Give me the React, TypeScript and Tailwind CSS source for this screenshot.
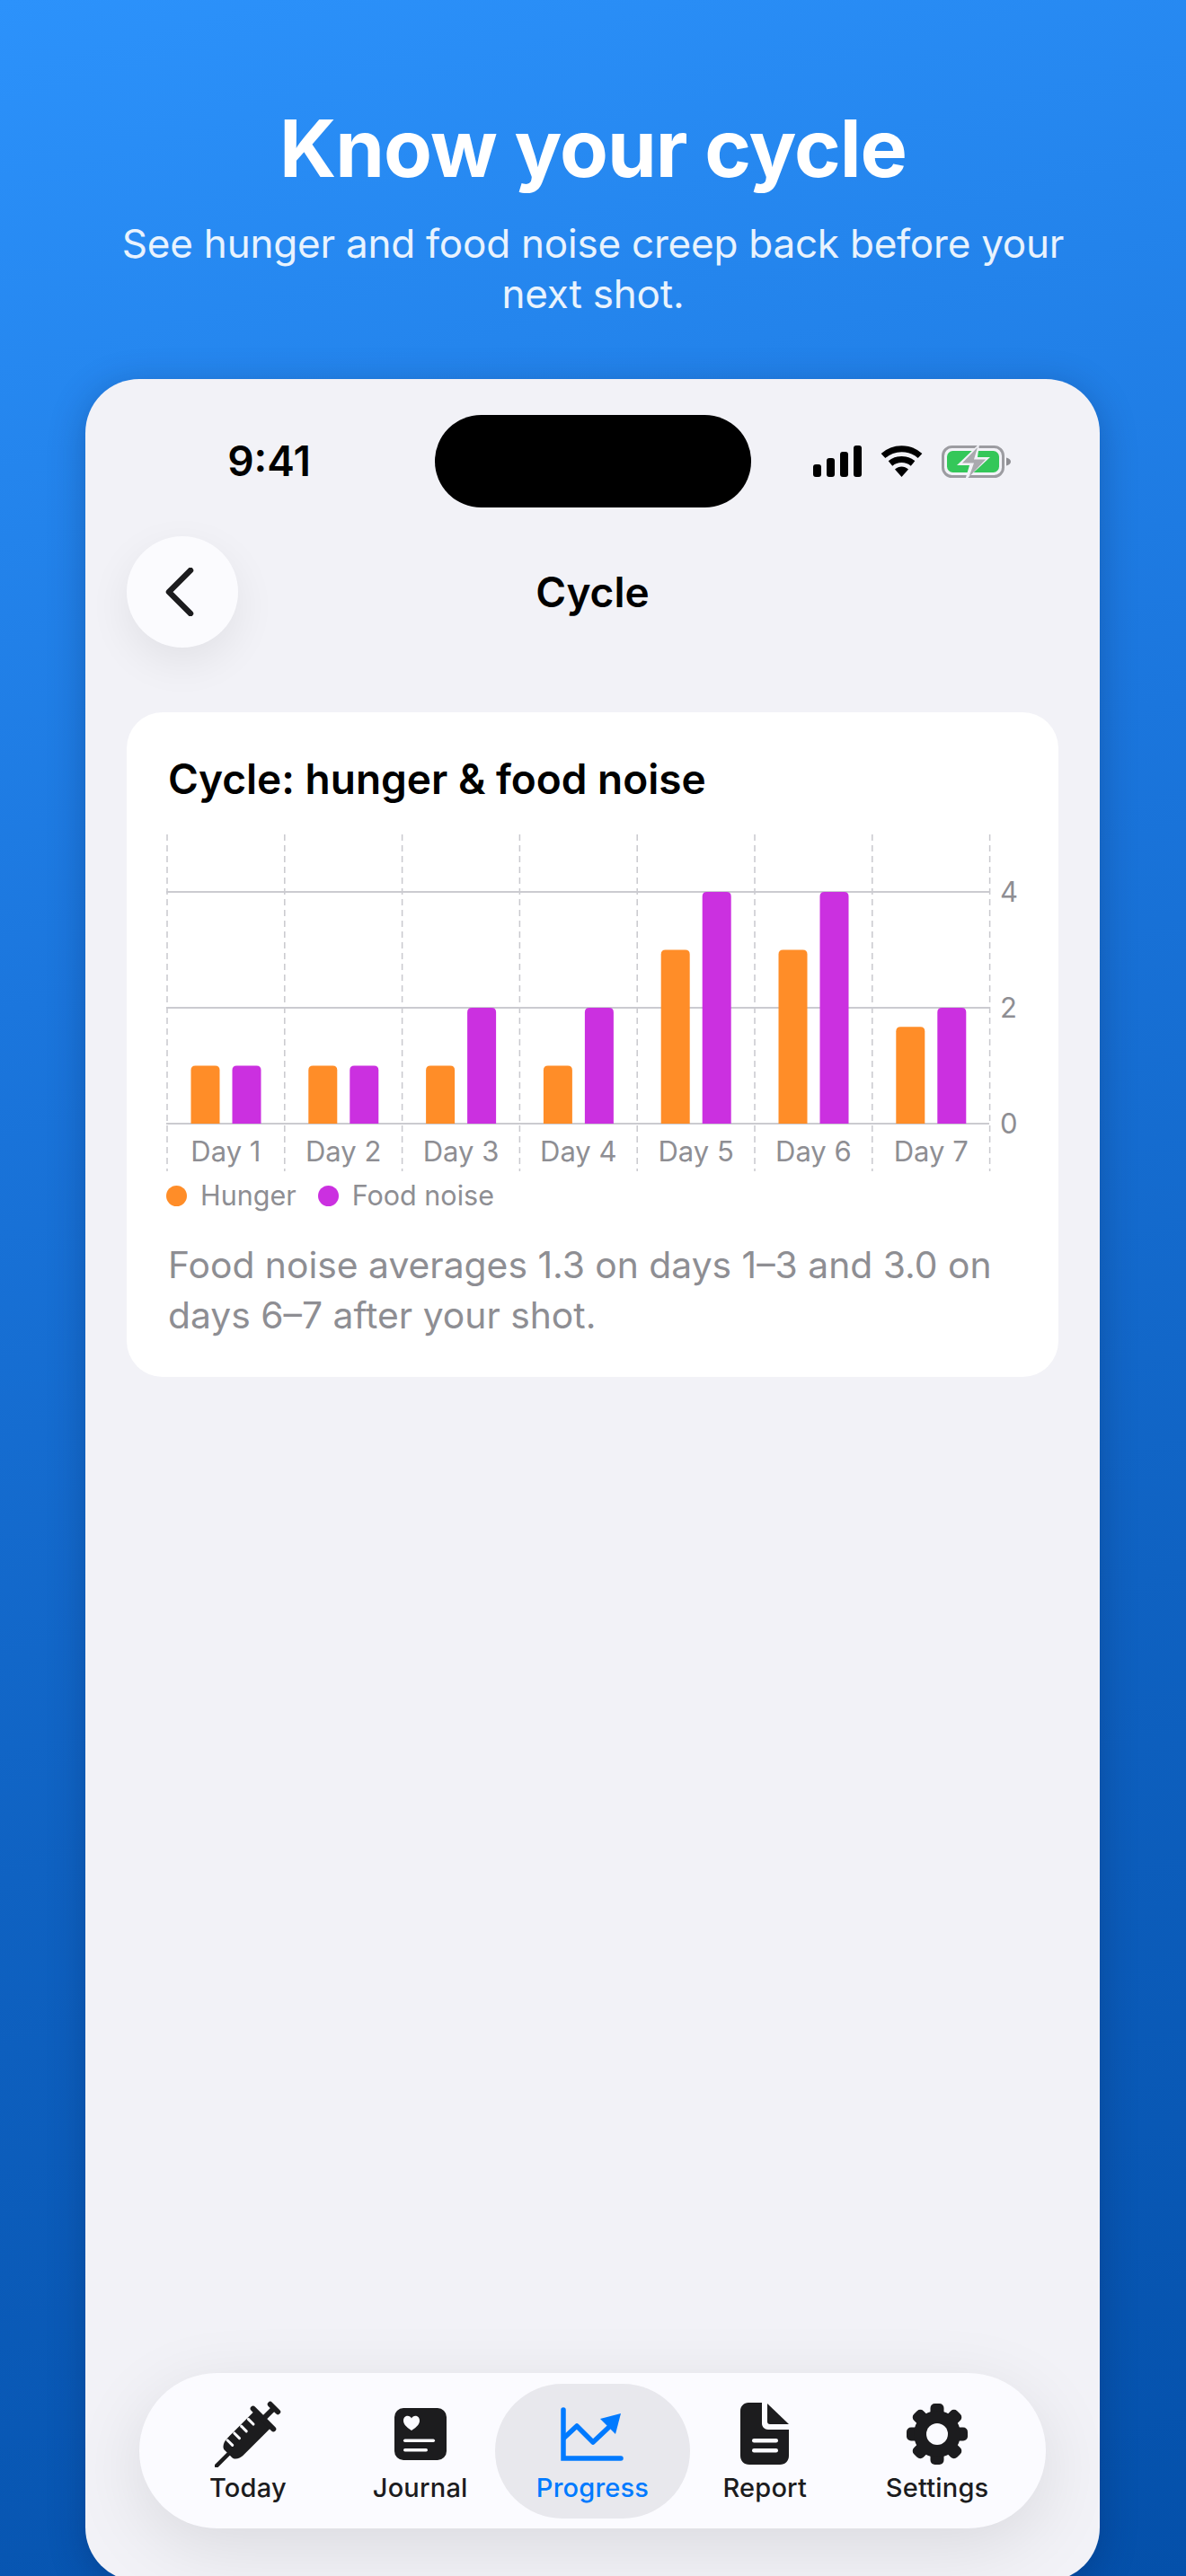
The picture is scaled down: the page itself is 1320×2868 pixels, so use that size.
const days = [
  { label: "Day 1", hunger: 1, noise: 1 },
  { label: "Day 2", hunger: 1, noise: 1 },
  { label: "Day 3", hunger: 1, noise: 2 },
  { label: "Day 4", hunger: 1, noise: 2 },
  { label: "Day 5", hunger: 3, noise: 4 },
  { label: "Day 6", hunger: 3, noise: 4 },
  { label: "Day 7", hunger: 1.67, noise: 2 },
];

const COL = 130.8;
const UNIT = 64.5;
const BASE = 322;

function barPath(x: number, h: number) {
  const w = 32;
  const r = 5;
  const top = BASE - h;
  return `M${x} ${BASE}V${top + r}Q${x} ${top} ${x + r} ${top}H${x + w - r}Q${x + w} ${top} ${x + w} ${top + r}V${BASE}Z`;
}

function CycleChart() {
  return (
    <svg width="960" height="375" viewBox="0 0 960 375" className="mt-[32px] -ml-[2px] block overflow-visible">
      {[0, 1, 2, 3, 4, 5, 6, 7].map((i) => (
        <line key={i} x1={1 + i * COL} x2={1 + i * COL} y1="0" y2="375" stroke="#c9c9ce" strokeWidth="1.5" strokeDasharray="7 5" />
      ))}
      {[64, 193, 322].map((y) => (
        <line key={y} x1="0" x2={916} y1={y} y2={y} stroke="#cbcbd0" strokeWidth="2" />
      ))}
      {days.map((d, i) => (
        <g key={d.label}>
          <path d={barPath(27.5 + i * COL, d.hunger * UNIT)} fill="#ff8d28" />
          <path d={barPath(73.5 + i * COL, d.noise * UNIT)} fill="#cb30e0" />
          <text x={1 + (i + 0.5) * COL} y="364" textAnchor="middle" fontSize="31" fill="#8e8e93">
            {d.label}
          </text>
        </g>
      ))}
      <text x="928" y="75" fontSize="31" fill="#8e8e93">4</text>
      <text x="928" y="204" fontSize="31" fill="#8e8e93">2</text>
      <text x="928" y="333" fontSize="31" fill="#8e8e93">0</text>
    </svg>
  );
}

function SignalIcon() {
  return (
    <svg width="54" height="35" viewBox="0 0 54 35" fill="#000">
      <rect x="0" y="21" width="9" height="14" rx="3" />
      <rect x="15" y="14" width="9" height="21" rx="3" />
      <rect x="30" y="7" width="9" height="28" rx="3" />
      <rect x="45" y="0" width="9" height="35" rx="3" />
    </svg>
  );
}

function WifiIcon() {
  return (
    <svg width="47" height="35" viewBox="0 0 47 35" fill="none" stroke="#000" strokeWidth="7">
      <path d="M3 11.5C14.5 1 32.5 1 44 11.5" />
      <path d="M11 20C18 14 29 14 36 20" />
      <path d="M16 26.5 23.500 35 31 26.500C26.500 22.500 20.500 22.500 16 26.500Z" fill="#000" stroke="none" />
    </svg>
  );
}

function BatteryIcon() {
  return (
    <svg width="78" height="38" viewBox="0 0 78 38" fill="none">
      <rect x="1.500" y="2.500" width="67" height="33" rx="10" stroke="#9c9ca1" strokeWidth="3" />
      <rect x="6" y="7" width="58" height="24" rx="6.500" fill="#34c759" />
      <path d="M72 14.500C75 15 77 17 77 19C77 21 75 23 72 23.500Z" fill="#8e8e93" />
      <path d="M42 -1 17 23H31L26 40 54 14H40Z" fill="#f2f2f7" />
      <path d="M40 3 23 20.500H36L30.500 36 49 16.500H36Z" fill="#a9a9ae" />
    </svg>
  );
}

function SyringeIcon() {
  return (
    <svg width="74" height="74" viewBox="0 0 74 74" className="text-[#1c1c1e]">
      <g transform="rotate(45 37 37)" fill="currentColor">
        <rect x="35" y="64" width="4.500" height="25" rx="2.200" />
        <path d="M24 13H50V58C50 62 47 68 43 68H31C27 68 24 62 24 58Z" />
        <rect x="18" y="10" width="38" height="6" rx="3" />
        <rect x="34" y="-4" width="6" height="16" />
        <rect x="28" y="-7" width="18" height="6" rx="3" />
        <g fill="#fbfbff">
          <rect x="24" y="23.500" width="11" height="3" rx="1.500" />
          <rect x="24" y="34.500" width="11" height="3" rx="1.500" />
          <rect x="24" y="45.500" width="11" height="3" rx="1.500" />
          <rect x="24" y="56.500" width="11" height="3" rx="1.500" />
        </g>
      </g>
    </svg>
  );
}

function JournalIcon() {
  return (
    <svg width="58" height="58" viewBox="0 0 58 58">
      <rect width="58" height="58" rx="10" fill="#1c1c1e" />
      <path d="M19 25C13 21 10 18 10 14C10 8 17 7 19 11.500C21 7 28 8 28 14C28 18 25 21 19 25Z" fill="#fbfbff" />
      <rect x="10" y="34.500" width="35" height="3.500" rx="1.700" fill="#fbfbff" />
      <rect x="10" y="45" width="27" height="3.500" rx="1.700" fill="#fbfbff" />
    </svg>
  );
}

function ProgressIcon() {
  return (
    <svg width="70" height="60" viewBox="0 0 70 60" fill="none" stroke="#007aff" strokeWidth="5.500" strokeLinecap="round">
      <path d="M3 3V57H67" />
      <path d="M4 34 18 21 36 39 53 23" strokeLinejoin="round" />
      <path d="M44 13 67 7 61 30Z" fill="#007aff" stroke="none" />
    </svg>
  );
}

function ReportIcon() {
  return (
    <svg width="54" height="69" viewBox="0 0 54 69">
      <path d="M9 0H24V23C24 27 27 30 31 30H54V59C54 65 50 69 44 69H10C4 69 0 65 0 59V9C0 4 4 0 9 0Z" fill="#1c1c1e" />
      <path d="M30 1 54 24H33C31 24 30 23 30 21Z" fill="#1c1c1e" />
      <rect x="13" y="40" width="29" height="4.500" rx="2.200" fill="#fbfbff" />
      <rect x="13" y="51" width="29" height="4.500" rx="2.200" fill="#fbfbff" />
    </svg>
  );
}

function GearIcon() {
  return (
    <svg width="68" height="68" viewBox="0 0 68 68" fill="#1c1c1e">
      {[0, 45, 90, 135, 180, 225, 270, 315].map((a) => (
        <rect key={a} x="26.500" y="0" width="15" height="16" rx="5" transform={`rotate(${a} 34 34)`} />
      ))}
      <circle cx="34" cy="34" r="26" />
      <circle cx="34" cy="34" r="12" fill="#fbfbff" />
    </svg>
  );
}

const tabs = [
  { label: "Today", icon: <SyringeIcon /> },
  { label: "Journal", icon: <JournalIcon /> },
  { label: "Progress", icon: <ProgressIcon />, active: true },
  { label: "Report", icon: <ReportIcon /> },
  { label: "Settings", icon: <GearIcon /> },
];

export default function App() {
  return (
    <div className="flex h-[2868px] w-[1320px] flex-col overflow-hidden bg-[linear-gradient(165deg,#2c92fb_0%,#1b76dd_35%,#0f62c2_65%,#0450aa_100%)] font-['Inter','Liberation_Sans',sans-serif]">
      {/* Hero text */}
      <header className="flex h-[422px] shrink-0 flex-col items-center pt-[112px] text-center text-white">
        <h1 className="text-[88px] leading-[106px] font-bold tracking-[-1px]">Know your cycle</h1>
        <p className="mt-[25px] w-[1120px] text-[44px] leading-[56px] tracking-[-0.22px] text-white/90">
          See hunger and food noise creep back before your next shot.
        </p>
      </header>

      {/* Phone */}
      <main className="mr-[96px] ml-[95px] flex h-[2452px] shrink-0 flex-col rounded-[60px] bg-[#f2f2f7] pt-[40px] shadow-[0_8px_40px_rgba(0,30,80,0.3)]">
        <div className="flex items-center">
          <div className="flex w-[389px] justify-center pl-[20px] text-[46px] font-semibold text-black">9:41</div>
          <div className="h-[103px] w-[352px] rounded-full bg-black" />
          <div className="flex w-[388px] items-center justify-center gap-[21px] pr-[30px]">
            <SignalIcon />
            <WifiIcon />
            <BatteryIcon />
          </div>
        </div>

        <div className="mt-[32px] grid grid-cols-[124px_1fr_124px] items-center px-[46px]">
          <button className="flex h-[124px] w-[124px] items-center justify-center rounded-full bg-[#fbfbfe] shadow-[0_16px_48px_rgba(0,0,0,0.07)]">
            <svg width="32" height="54" viewBox="0 0 32 54" fill="none" stroke="#1c1c1e" strokeWidth="6.500" strokeLinecap="round" strokeLinejoin="round" className="-ml-[6px]">
              <path d="M28 3 4 27 28 51" />
            </svg>
          </button>
          <h2 className="text-center text-[46px] font-semibold text-black">Cycle</h2>
          <div />
        </div>

        {/* Chart card */}
        <section className="mx-[46px] mt-[72px] rounded-[40px] bg-white px-[46px] pt-[44px] pb-[41px]">
          <h3 className="text-[46px] leading-[60px] font-semibold text-black">Cycle: hunger &amp; food noise</h3>
          <CycleChart />
          <div className="mt-[7px] flex items-center text-[30.5px] leading-[40px] text-[#8e8e93]">
            <span className="mr-[15px] -ml-[2px] h-[23px] w-[23px] rounded-full bg-[#ff8d28]" />
            <span>Hunger</span>
            <span className="mr-[15px] ml-[24px] h-[23px] w-[23px] rounded-full bg-[#cb30e0]" />
            <span>Food noise</span>
          </div>
          <p className="mt-[29px] text-[40.8px] leading-[56px] text-[#8e8e93]">
            Food noise averages 1.3 on days 1–3 and 3.0 on days 6–7 after your shot.
          </p>
        </section>

        {/* Floating tab bar */}
        <nav className="mx-[60px] mt-[1109px] grid h-[173px] grid-cols-5 items-center rounded-full bg-[#fbfbff] px-[25px] shadow-[0_20px_80px_rgba(0,0,0,0.1)]">
          {tabs.map((t) => (
            <div
              key={t.label}
              className={
                t.active
                  ? "-mx-[13px] flex h-[150px] flex-col items-center justify-center rounded-full bg-[#e8e8ed]"
                  : "flex h-[150px] flex-col items-center justify-center"
              }
            >
              <div className="flex h-[78px] items-center justify-center pt-[10px]">{t.icon}</div>
              <span className={t.active ? "mt-[4px] text-[29px] font-medium tracking-[0.2px] text-[#007aff]" : "mt-[4px] text-[29px] font-medium tracking-[0.2px] text-[#1c1c1e]"}>
                {t.label}
              </span>
            </div>
          ))}
        </nav>
      </main>
    </div>
  );
}
